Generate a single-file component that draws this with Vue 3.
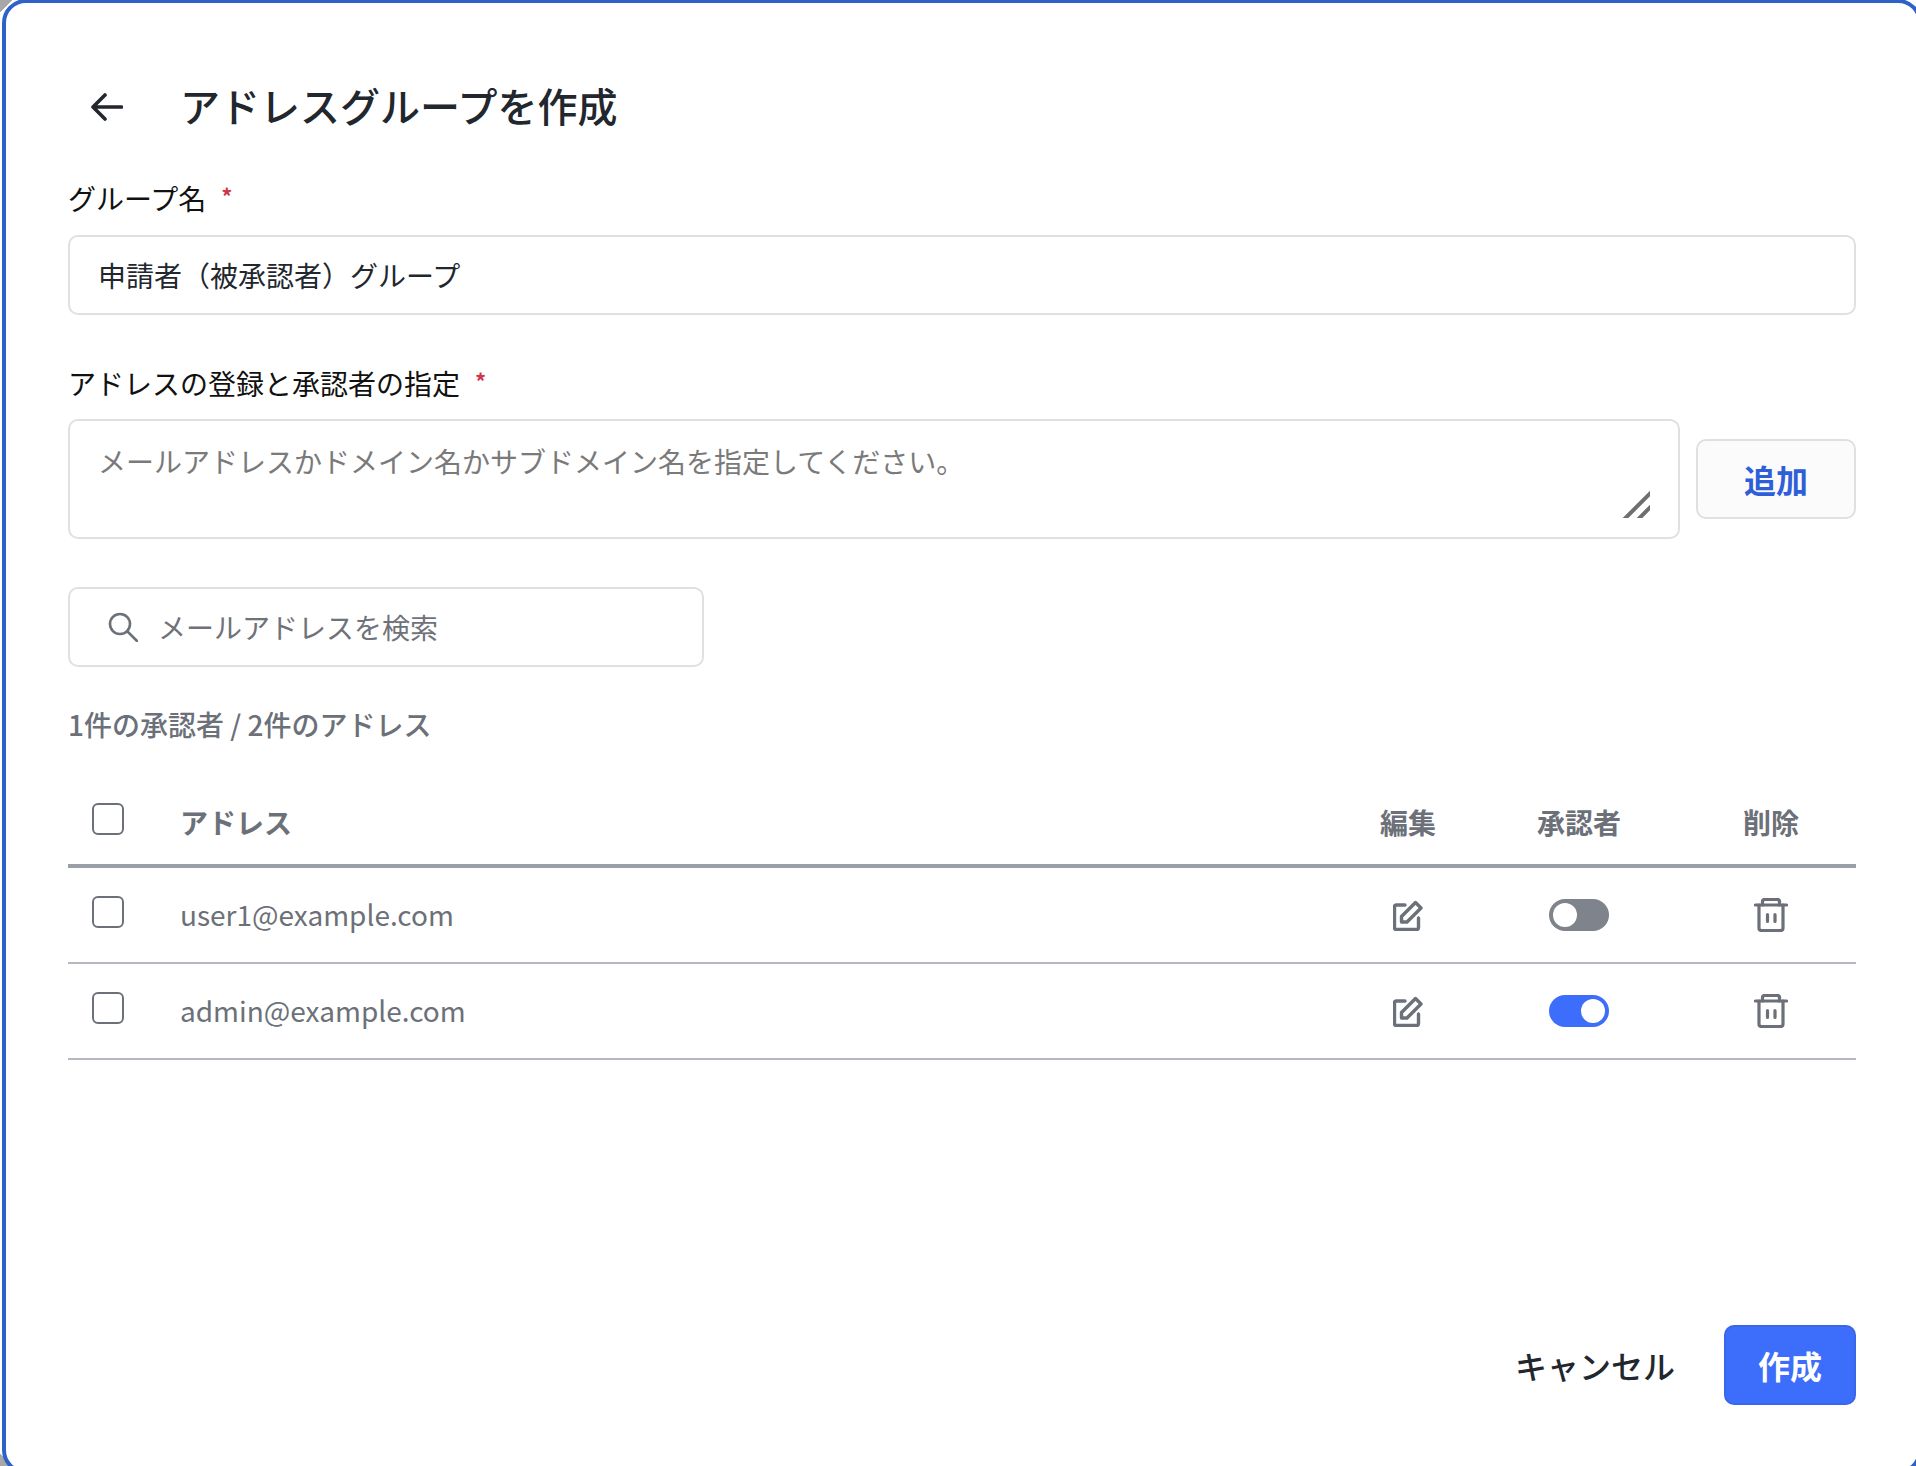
<template>
  <div class="page">
    <div class="dialog">
      <header class="title-row">
        <button type="button" class="back-btn" aria-label="戻る">
          <svg width="32" height="28" viewBox="0 0 32 28" fill="none" stroke="currentColor" stroke-width="3.6" stroke-linecap="round" stroke-linejoin="round">
            <path d="M30.5 14H2M14 2 2 14l12 12" />
          </svg>
        </button>
        <h1>アドレスグループを作成</h1>
      </header>

      <label class="field-label first" for="groupName">グループ名<span class="req">*</span></label>
      <input id="groupName" v-model="groupName" class="text-input" type="text" />

      <label class="field-label second" for="addresses">アドレスの登録と承認者の指定<span class="req">*</span></label>
      <div class="address-row">
        <div class="area-wrap">
          <textarea id="addresses" placeholder="メールアドレスかドメイン名かサブドメイン名を指定してください。"></textarea>
          <svg class="grip" width="28" height="28" viewBox="0 0 28 28" stroke="#6f6f6f" stroke-width="4">
            <path d="M1 30.5 30.5 1M15 30.5 30.5 15" />
          </svg>
        </div>
        <button type="button" class="add-btn">追加</button>
      </div>

      <div class="search-box">
        <svg width="30" height="30" viewBox="0 0 30 30" fill="none" stroke="#6c7078" stroke-width="2.6" stroke-linecap="round">
          <circle cx="12" cy="12" r="10" />
          <path d="M19.5 19.5 29 29" />
        </svg>
        <input type="text" placeholder="メールアドレスを検索" />
      </div>

      <p class="count">1件の承認者 / 2件のアドレス</p>

      <div class="table">
        <div class="table-row table-head">
          <div class="cell-check head-check"><input type="checkbox" /></div>
          <div>アドレス</div>
          <div class="center">編集</div>
          <div class="center">承認者</div>
          <div class="center">削除</div>
        </div>
        <div v-for="row in rows" :key="row.email" class="table-row">
          <div class="cell-check"><input type="checkbox" /></div>
          <div class="email">{{ row.email }}</div>
          <div class="center">
            <svg width="30" height="31" viewBox="0 0 30 31" fill="none" stroke="#6c7078" stroke-width="3.4" stroke-linejoin="round" stroke-linecap="round">
              <path d="M12 5H3.5Q1.5 5 1.5 7v21q0 1.5 2 1.5h20q2 0 2-2V18" />
              <path d="M8.5 22v-5.5l14-14L28 8 14 22Z" />
            </svg>
          </div>
          <div class="center">
            <button type="button" class="toggle" :class="{ on: row.approver }" @click="row.approver = !row.approver">
              <span class="knob"></span>
            </button>
          </div>
          <div class="center">
            <svg width="34" height="34" viewBox="0 0 34 34" fill="none" stroke="#6c7078" stroke-width="3.2" stroke-linecap="round" stroke-linejoin="round">
              <path d="M1.5 7h31" />
              <path d="M8.5 7V3.5q0-2 2-2h13q2 0 2 2V7" />
              <path d="M5 7v23q0 2.5 2.5 2.5h19q2.5 0 2.5-2.5V7" />
              <path d="M13.5 16.5v7M21 16.5v7" />
            </svg>
          </div>
        </div>
      </div>

      <footer class="actions">
        <button type="button" class="cancel-btn">キャンセル</button>
        <button type="button" class="create-btn">作成</button>
      </footer>
    </div>
  </div>
</template>

<script setup>
import { ref } from 'vue'

const groupName = ref('申請者（被承認者）グループ')

const rows = ref([
  { email: 'user1@example.com', approver: false },
  { email: 'admin@example.com', approver: true },
])
</script>

<style>
html, body {
  margin: 0;
  padding: 0;
}
</style>

<style scoped>
* {
  box-sizing: border-box;
}

.page {
  width: 1916px;
  height: 1466px;
  overflow: hidden;
  background:
    linear-gradient(135deg, #a8a8a8 9px, transparent 9px),
    linear-gradient(45deg, #a8a8a8 9px, transparent 9px),
    #fff;
  font-family: 'Noto Sans CJK JP', 'Noto Sans', sans-serif;
  font-size: 28px;
}

.dialog {
  display: flex;
  flex-direction: column;
  width: 1920px;
  height: 1475px;
  margin: -1px 0 0 2px;
  padding: 74px 62px 65px 62px;
  background: #fff;
  border: 4px solid #2f62c9;
  border-radius: 24px;
}

button {
  font-family: inherit;
  cursor: pointer;
}

.title-row {
  display: flex;
  align-items: center;
  height: 60px;
  padding-left: 23px;
}

.back-btn {
  display: flex;
  padding: 0;
  border: none;
  background: none;
  color: #22272e;
}

.title-row h1 {
  margin: 0 0 3px 57px;
  font-size: 40px;
  font-weight: 500;
  line-height: 57px;
  color: #22272e;
}

.field-label {
  display: block;
  line-height: 40px;
  color: #111;
}

.field-label.first {
  margin: 41px 0 17px;
}

.field-label.second {
  margin: 48px 0 16px;
}

.req {
  margin-left: 15px;
  font-size: 22px;
  font-weight: 700;
  line-height: 1;
  vertical-align: 5px;
  color: #d0374a;
}

.text-input {
  display: block;
  width: 100%;
  height: 80px;
  padding: 0 28px;
  border: 2px solid #e0e0e0;
  border-radius: 10px;
  outline: none;
  font: inherit;
  color: #22272e;
}

.address-row {
  display: flex;
  align-items: center;
  gap: 16px;
}

.area-wrap {
  position: relative;
  flex: 1;
  height: 120px;
}

.area-wrap textarea {
  display: block;
  width: 100%;
  height: 100%;
  padding: 20px 28px;
  border: 2px solid #e0e0e0;
  border-radius: 10px;
  outline: none;
  resize: none;
  font: inherit;
  line-height: 40px;
}

.area-wrap textarea::placeholder {
  color: #7a7a7a;
  opacity: 1;
}

.grip {
  position: absolute;
  right: 30px;
  bottom: 21px;
}

.add-btn {
  width: 160px;
  height: 80px;
  padding: 0;
  border: 2px solid #e0e0e0;
  border-radius: 10px;
  background: #fbfbfc;
  font-size: 32px;
  font-weight: 700;
  color: #2f5fd8;
}

.search-box {
  display: flex;
  align-items: center;
  gap: 20px;
  width: 636px;
  height: 80px;
  margin-top: 48px;
  padding-left: 38px;
  border: 2px solid #e0e0e0;
  border-radius: 10px;
}

.search-box input {
  flex: 1;
  min-width: 0;
  padding: 0;
  border: none;
  outline: none;
  font: inherit;
}

.search-box input::placeholder {
  color: #6f7278;
  opacity: 1;
}

.count {
  margin: 37px 0 0;
  line-height: 40px;
  font-weight: 500;
  color: #6c7078;
}

.table {
  margin-top: 36px;
}

.table-row {
  display: grid;
  grid-template-columns: 112px 1fr 128px 214px 170px;
  align-items: center;
  height: 96px;
  border-bottom: 2px solid #b5b9bf;
  color: #6c7078;
}

.table-head {
  height: 88px;
  border-bottom: 4px solid #9a9fa8;
  font-weight: 700;
}

.email {
  padding-bottom: 2px;
}

.center {
  display: flex;
  justify-content: center;
}

.cell-check {
  display: flex;
  padding-left: 24px;
  transform: translateY(-3px);
}

.cell-check input {
  width: 32px;
  height: 32px;
  margin: 0;
  appearance: none;
  background: #fff;
  border: 2px solid #6c7078;
  border-radius: 6px;
}

.toggle {
  position: relative;
  width: 60px;
  height: 32px;
  padding: 0;
  border: none;
  border-radius: 16px;
  background: #7f838b;
}

.toggle.on {
  background: #3d6dfb;
}

.knob {
  position: absolute;
  top: 4px;
  left: 4px;
  width: 24px;
  height: 24px;
  border-radius: 50%;
  background: #fff;
}

.toggle.on .knob {
  left: 32px;
}

.actions {
  display: flex;
  justify-content: flex-end;
  align-items: center;
  gap: 49px;
  margin-top: auto;
}

.cancel-btn {
  padding: 0;
  border: none;
  background: none;
  font-size: 32px;
  font-weight: 500;
  color: #22272e;
}

.create-btn {
  width: 132px;
  height: 80px;
  padding: 0;
  border: 2px solid #3a66ea;
  border-radius: 10px;
  background: #3d6dfb;
  font-size: 32px;
  font-weight: 700;
  color: #fff;
}
</style>
